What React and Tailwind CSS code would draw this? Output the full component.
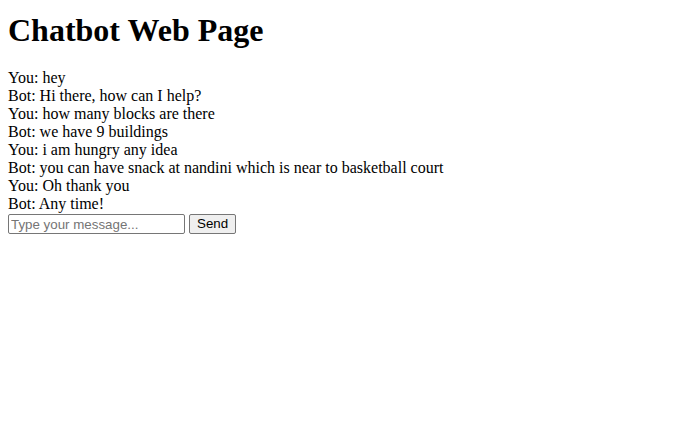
import { useState } from "react";

const initialMessages = [
  { from: "You", text: "hey" },
  { from: "Bot", text: "Hi there, how can I help?" },
  { from: "You", text: "how many blocks are there" },
  { from: "Bot", text: "we have 9 buildings" },
  { from: "You", text: "i am hungry any idea" },
  {
    from: "Bot",
    text: "you can have snack at nandini which is near to basketball court",
  },
  { from: "You", text: "Oh thank you" },
  { from: "Bot", text: "Any time!" },
];

export default function App() {
  const [messages, setMessages] = useState(initialMessages);
  const [draft, setDraft] = useState("");

  const handleSend = () => {
    if (!draft.trim()) return;
    setMessages((current) => [...current, { from: "You", text: draft }]);
    setDraft("");
  };

  return (
    <div className="min-h-screen bg-white px-2 py-px font-['Liberation_Serif',serif] text-base text-black">
      <h1 className="mt-[10.5px] mb-[20.5px] text-[32px] font-bold leading-[37px]">
        Chatbot Web Page
      </h1>

      <div className="leading-[18px]">
        {messages.map((message, index) => (
          <div key={index}>
            {message.from}: {message.text}
          </div>
        ))}
      </div>

      <div className="flex items-center gap-1 pt-px">
        <input
          type="text"
          value={draft}
          onChange={(e) => setDraft(e.target.value)}
          placeholder="Type your message..."
          className="h-[20px] w-[177px] rounded-[2px] border border-[#767676] px-[2px] font-['Liberation_Sans',sans-serif] text-[13.33px] outline-none placeholder:text-[#757575]"
        />
        <button
          type="button"
          onClick={handleSend}
          className="h-[20px] rounded-[2px] border border-[#767676] bg-[#efefef] px-[7px] font-['Liberation_Sans',sans-serif] text-[13.33px] leading-none"
        >
          Send
        </button>
      </div>
    </div>
  );
}
